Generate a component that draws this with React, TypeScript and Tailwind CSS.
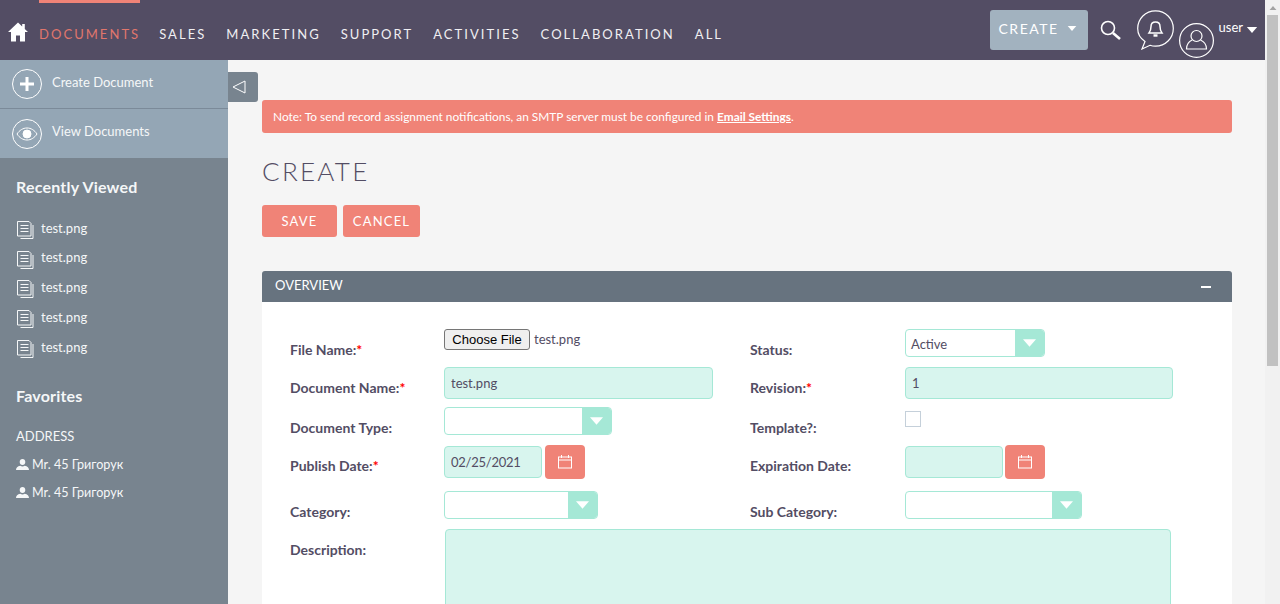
import type { ReactNode } from "react";

const navItems = ["Sales", "Marketing", "Support", "Activities", "Collaboration", "All"];
const recent = ["test.png", "test.png", "test.png", "test.png", "test.png"];

function Caret({ className }: { className: string }) {
  return (
    <svg viewBox="0 0 12 7" className={className} fill="currentColor">
      <path d="M0 0h12L6 7z" />
    </svg>
  );
}

function HomeIcon() {
  return (
    <svg viewBox="0 0 20 20" className="h-5 w-5 text-white" fill="currentColor">
      <path d="M10 .5 0 10h3v9.500h5v-6h4v6h5V10h3l-3.200-3V2h-2.600v2.600z" />
    </svg>
  );
}

function CalendarIcon() {
  return (
    <svg viewBox="0 0 14 14" className="h-[14px] w-[14px]" fill="none" stroke="currentColor" strokeWidth="1">
      <rect x="0.5" y="2" width="13" height="11" />
      <path d="M0.5 5h13M3.500 0v3M10.500 0v3" />
    </svg>
  );
}

function DocIcon() {
  return (
    <svg viewBox="0 0 17 18" className="h-[18px] w-[17px]" fill="none" stroke="currentColor" strokeWidth="1">
      <path d="M.5.500h11.500l2 2V15H.5z" />
      <path d="M3.500 4.500h8M3.500 7.500h8M3.500 10.500h8" />
      <path d="M16 4v13.500H3.500" />
    </svg>
  );
}

function PersonIcon() {
  return (
    <svg viewBox="0 0 13 11" className="mb-[3px] h-[11px] w-[13px]" fill="currentColor">
      <path d="M6.500 0C8.200 0 9.300 1.300 9.300 3S8.200 6 6.500 6 3.700 4.700 3.700 3 4.800 0 6.500 0zM0 11c0-2.500 1.500-3.600 4.300-4.300.7.500 1.400.7 2.200.7s1.500-.2 2.200-.7C11.500 7.400 13 8.500 13 11z" />
    </svg>
  );
}

function SideAction({ icon, label }: { icon: ReactNode; label: string }) {
  return (
    <div className="flex h-[49px] items-center gap-[10px] border-b border-[#7b8a99] pl-3 text-[13px] text-[#f5f7f8]">
      <span className="flex h-[30px] w-[30px] items-center justify-center rounded-full border border-white text-white">{icon}</span>
      <span className="mb-[3px]">{label}</span>
    </div>
  );
}

function Label({ text, required }: { text: string; required?: boolean }) {
  return (
    <div className="mt-[11px] h-5 text-[14px] leading-5 font-bold text-[#534d64]">
      {text}
      {required && <span className="text-[#ff0000]">*</span>}
    </div>
  );
}

function TextField({ value, className }: { value?: string; className: string }) {
  return (
    <input
      readOnly
      value={value ?? ""}
      className={`h-[32px] rounded-[4px] border border-[#a5e8d6] bg-[#d8f5ee] px-[6px] text-[13px] text-[#534d64] outline-none ${className}`}
    />
  );
}

function SelectBox({ value, className }: { value?: string; className: string }) {
  return (
    <div className={`flex h-[28px] overflow-hidden rounded-[4px] border border-[#a5e8d6] bg-white ${className}`}>
      <span className="flex-1 pl-[5px] text-[13px] leading-[28px] text-[#534d64]">{value}</span>
      <span className="flex w-[29px] items-center justify-center bg-[#a5e8d6] text-white">
        <Caret className="h-[8px] w-[13px]" />
      </span>
    </div>
  );
}

function DateField({ value, inputClass }: { value?: string; inputClass: string }) {
  return (
    <div className="flex items-start">
      <TextField value={value} className={`mt-[1px] ${inputClass}`} />
      <button className="flex h-[34px] w-10 items-center justify-center rounded-[4px] bg-[#f08377] text-white">
        <CalendarIcon />
      </button>
    </div>
  );
}

export default function App() {
  return (
    <div className="flex h-[604px] w-[1280px] overflow-hidden bg-[#f5f5f5] font-['Lato','Liberation_Sans',sans-serif]">
      <div className="flex w-[1265px] flex-col">
        <header className="flex h-[60px] shrink-0 bg-[#534d64] pr-[7px]">
          <div className="flex w-[39px] items-center pt-1 pl-2">
            <HomeIcon />
          </div>
          <nav className="flex flex-1 text-[13px] tracking-[2.050px] text-white uppercase">
            <a className="-mr-px h-[60px] border-t-[3px] border-[#f08377] pt-[22px] text-[#e0766c]">Documents</a>
            {navItems.map((item) => (
              <a key={item} className="ml-5 pt-[25px] text-[#f0eff2]">
                {item}
              </a>
            ))}
          </nav>
          <div className="mt-[10px] flex h-10 w-[98px] items-center rounded-[3px] bg-[#a2b2bf] pb-1 pl-[9px] text-[14px] tracking-[1.500px] text-white">
            CREATE
            <Caret className="mt-[1px] ml-[8px] h-[5px] w-[10px]" />
          </div>
          <div className="mt-[20px] ml-[12px] h-5 w-[23px] text-white">
            <svg viewBox="0 0 21 20" className="h-5 w-[21px]" fill="none" stroke="currentColor">
              <circle cx="8" cy="8" r="6.500" strokeWidth="1.600" />
              <path d="m13 13 7 6" strokeWidth="2.600" />
            </svg>
          </div>
          <div className="mt-[10px] ml-[14px] text-white">
            <svg viewBox="0 0 37 40" className="h-[40px] w-[37px]" fill="none" stroke="currentColor" strokeWidth="1.200">
              <path d="M8 31.500C3.500 28.500.7 24 .7 18.500.7 8.700 8.500.8 18.500.8s17.800 7.900 17.800 17.700-8 17.700-17.800 17.700c-2 0-3.800-.3-5.500-.9L5 39z" />
              <path d="M12 23c1.500-2 2-4 2-6.500 0-3 2-4.500 4.500-4.500s4.500 1.500 4.500 4.500c0 2.500.5 4.500 2 6.500z" strokeWidth="1.500" />
              <path d="M16.500 25.500h4" strokeWidth="2.400" />
            </svg>
          </div>
          <div className="mt-[23px] ml-[5px] text-white">
            <svg viewBox="0 0 35 35" className="h-[35px] w-[35px]" fill="none" stroke="currentColor" strokeWidth="1.200">
              <circle cx="17.500" cy="17.500" r="16.900" />
              <circle cx="17.500" cy="13" r="5.500" />
              <path d="M13 17C9 19 7.500 22 7.500 26h20c0-4-1.500-7-6-9" />
            </svg>
          </div>
          <div className="mt-[20px] ml-[5px] flex h-4 items-center text-[13px] text-white">
            user
            <Caret className="mt-[3px] ml-[3px] h-[6px] w-[12px]" />
          </div>
        </header>

        <div className="flex min-h-0 flex-1">
          <aside className="w-[228px] shrink-0 bg-[#78848f] text-[#f5f7f8]">
            <div className="bg-[#94a6b5]">
              <SideAction
                label="Create Document"
                icon={
                  <svg viewBox="0 0 14 14" className="h-[14px] w-[14px]" fill="currentColor">
                    <path d="M5.500 0h3v5.500H14v3H8.500V14h-3V8.500H0v-3h5.500z" />
                  </svg>
                }
              />
              <div className="[&>div]:border-b-0">
                <SideAction
                  label="View Documents"
                  icon={
                    <svg viewBox="0 0 22 14" className="h-[14px] w-[22px]" fill="none" stroke="currentColor" strokeWidth="1">
                      <path d="M1 7c2.500-3.800 6-6 10-6s7.500 2.200 10 6c-2.500 3.800-6 6-10 6S3.500 10.800 1 7z" />
                      <circle cx="11" cy="7" r="4" fill="currentColor" />
                    </svg>
                  }
                />
              </div>
            </div>
            <h2 className="mt-[19px] pl-4 text-[16px] leading-5 font-bold tracking-[0.200px]">Recently Viewed</h2>
            <ul className="mt-[18px] pl-[17px]">
              {recent.map((name, i) => (
                <li key={i} className="flex h-[29.750px] items-center gap-[7px] text-[13px]">
                  <DocIcon />
                  <span className="mb-[3px]">{name}</span>
                </li>
              ))}
            </ul>
            <h2 className="mt-[22px] pl-4 text-[16px] leading-5 font-bold tracking-[0.200px]">Favorites</h2>
            <div className="mt-[22px] pl-4 text-[13px] leading-4">ADDRESS</div>
            <div className="mt-[14px] flex flex-col gap-3">
              {[0, 1].map((i) => (
                <div key={i} className="flex h-4 items-center gap-[3px] pl-4 text-[12.600px]">
                  <PersonIcon />
                  {"Mr. 45 Григорук"}
                </div>
              ))}
            </div>
          </aside>

          <main className="relative min-w-0 flex-1 pt-10 pr-[33px] pl-[34px]">
            <button className="absolute top-3 left-0 flex h-[30px] w-[30px] items-center rounded-r-[3px] bg-[#78848f] pl-1 text-white">
              <svg viewBox="0 0 14 14" className="h-[14px] w-[14px]" fill="none" stroke="currentColor" strokeWidth="1">
                <path d="M13 1v12L1 7z" />
              </svg>
            </button>
            <div className="flex h-[33px] items-center rounded-[3px] bg-[#f08377] pl-[11px] text-[11.880px] text-white">
              <span>
                Note: To send record assignment notifications, an SMTP server must be configured in{" "}
                <b className="underline">Email Settings</b>.
              </span>
            </div>
            <h1 className="mt-[22px] text-[26px] leading-8 font-light tracking-[2.300px] text-[#534d64]">CREATE</h1>
            <div className="mt-[18px] flex gap-[6px]">
              <button className="h-8 w-[75px] rounded-[3px] bg-[#f08377] pt-[2px] text-[13px] tracking-[1.200px] text-white">SAVE</button>
              <button className="h-8 w-[77px] rounded-[3px] bg-[#f08377] pt-[2px] text-[13px] tracking-[1.200px] text-white">CANCEL</button>
            </div>
            <section className="mt-[34px]">
              <div className="flex h-[31px] items-center justify-between rounded-t-[3px] bg-[#67737f] pr-[21px] pb-[2px] pl-[13px] text-[13px] text-white">
                OVERVIEW
                <span className="mt-[2px] h-[2px] w-[10px] bg-white" />
              </div>
              <div className="grid h-[400px] grid-cols-[154px_306px_155px_1fr] grid-rows-[38px_40px_38px_46px_38px_1fr] bg-white pt-[27px] pl-7">
                <Label text="File Name:" required />
                <div className="flex items-start text-[13px] text-[#534d64]">
                  <button className="h-[21px] w-[86px] rounded-[3px] border border-[#767676] bg-[#efefef] font-['Liberation_Sans',sans-serif] text-[13px] text-black">
                    Choose File
                  </button>
                  <span className="ml-1 leading-[20px]">test.png</span>
                </div>
                <Label text="Status:" />
                <SelectBox value="Active" className="w-[140px]" />

                <Label text="Document Name:" required />
                <TextField value="test.png" className="w-[269px]" />
                <Label text="Revision:" required />
                <TextField value="1" className="w-[268px]" />

                <Label text="Document Type:" />
                <SelectBox className="w-[168px]" />
                <Label text="Template?:" />
                <span className="mt-[4px] h-4 w-4 border border-[#c5d0da] bg-white" />

                <Label text="Publish Date:" required />
                <DateField value="02/25/2021" inputClass="mr-[3px] w-[98px] tracking-[-0.250px]" />
                <Label text="Expiration Date:" />
                <DateField inputClass="mr-[2px] w-[98px]" />

                <Label text="Category:" />
                <SelectBox className="w-[154px]" />
                <Label text="Sub Category:" />
                <SelectBox className="w-[177px]" />

                <Label text="Description:" />
                <textarea
                  readOnly
                  className="col-span-3 ml-[1px] h-[100px] w-[726px] resize-none rounded-[4px] border border-[#a5e8d6] bg-[#d8f5ee] outline-none"
                />
              </div>
            </section>
          </main>
        </div>
      </div>

      <div className="flex w-[15px] shrink-0 flex-col bg-[#f1f1f1]">
        <Caret className="mt-[6px] ml-1 h-[4px] w-[8px] rotate-180 text-[#a3a3a3]" />
        <div className="mt-[5px] ml-[2px] h-[351px] w-[11px] bg-[#c1c1c1]" />
      </div>
    </div>
  );
}
